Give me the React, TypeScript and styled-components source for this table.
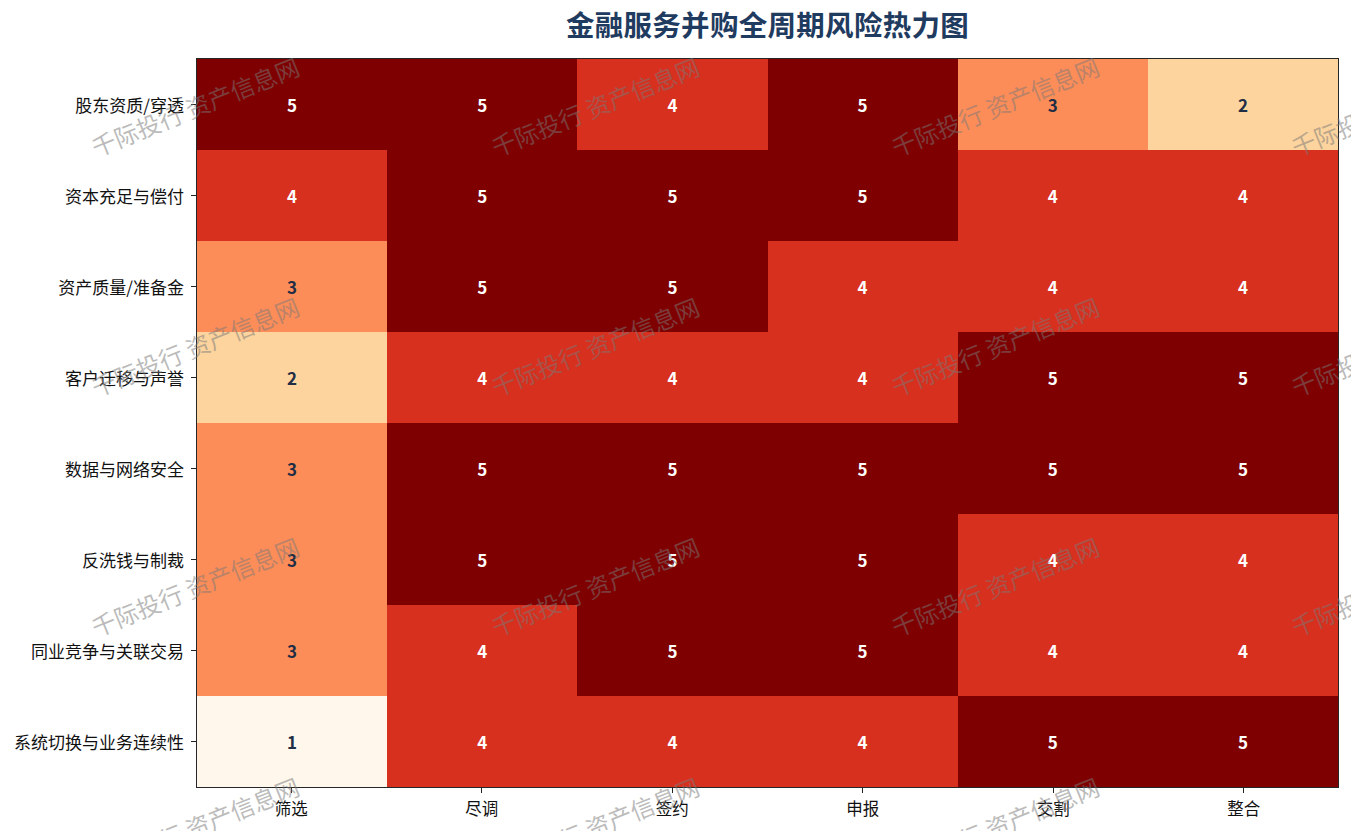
import React from "react";
import styled, { createGlobalStyle } from "styled-components";

const rows = [
    "股东资质/穿透",
    "资本充足与偿付",
    "资产质量/准备金",
    "客户迁移与声誉",
    "数据与网络安全",
    "反洗钱与制裁",
    "同业竞争与关联交易",
    "系统切换与业务连续性",
];

const stages = ["筛选", "尽调", "签约", "申报", "交割", "整合"];

const scores = [
    [5, 5, 4, 5, 3, 2],
    [4, 5, 5, 5, 4, 4],
    [3, 5, 5, 4, 4, 4],
    [2, 4, 4, 4, 5, 5],
    [3, 5, 5, 5, 5, 5],
    [3, 5, 5, 5, 4, 4],
    [3, 4, 5, 5, 4, 4],
    [1, 4, 4, 4, 5, 5],
];

// OrRd colormap, 1..5
const palette: Record<number, string> = {
    1: "#fff7ec",
    2: "#fdd49e",
    3: "#fc8d59",
    4: "#d7301f",
    5: "#7f0000",
};

const watermarks: { x: number; y: number }[] = [];
for (let j = 0; j < 4; j++) {
    for (let i = 0; i < 4; i++) {
        watermarks.push({ x: 195 + i * 400, y: 106 + j * 240 });
    }
}

const GlobalStyle = createGlobalStyle`
    html, body {
        margin: 0;
        padding: 0;
        background: #ffffff;
    }
    body {
        font-family: "Noto Sans CJK SC", "Noto Sans", sans-serif;
    }
`;

const Page = styled.div`
    position: relative;
    width: 1351px;
    height: 831px;
    overflow: hidden;
    background: #ffffff;
`;

const Title = styled.h1`
    margin: 0;
    height: 58px;
    padding-top: 4px;
    box-sizing: border-box;
    width: 1535px;
    text-align: center;
    font-size: 28.5px;
    line-height: 40px;
    font-weight: 700;
    color: #1f3b60;
    letter-spacing: 0.3px;
`;

const Chart = styled.div`
    display: grid;
    grid-template-columns: 196px 1143px;
    grid-template-rows: 730px auto;
`;

const YAxis = styled.div`
    display: flex;
    flex-direction: column;
    padding: 1px 0;
`;

const YRow = styled.div`
    flex: 1;
    display: flex;
    align-items: center;
    justify-content: flex-end;
    gap: 7px;
`;

const YLabel = styled.span`
    font-size: 17px;
    color: #111111;
    white-space: nowrap;
`;

const YTick = styled.span`
    width: 5px;
    height: 1px;
    background: #222222;
`;

const Axes = styled.div`
    box-sizing: border-box;
    border: 1px solid #262626;
    display: grid;
    grid-template-columns: repeat(6, 1fr);
    grid-template-rows: repeat(8, 1fr);
`;

const Cell = styled.div<{ $level: number }>`
    display: flex;
    align-items: center;
    justify-content: center;
    background: ${({ $level }) => palette[$level]};
    color: ${({ $level }) => ($level >= 4 ? "#ffffff" : "#1f2d45")};
    font-size: 17px;
    font-weight: 700;
`;

const Spacer = styled.div``;

const XAxis = styled.div`
    display: grid;
    grid-template-columns: repeat(6, 1fr);
`;

const XItem = styled.div`
    display: flex;
    flex-direction: column;
    align-items: center;
    gap: 4px;
`;

const XTick = styled.span`
    width: 1px;
    height: 5px;
    background: #222222;
`;

const XLabel = styled.span`
    font-size: 16.5px;
    line-height: 22px;
    color: #111111;
`;

const WatermarkLayer = styled.div`
    position: absolute;
    inset: 0;
    pointer-events: none;
`;

const Watermark = styled.span<{ $x: number; $y: number }>`
    position: absolute;
    left: ${({ $x }) => $x}px;
    top: ${({ $y }) => $y}px;
    transform: translate(-50%, -50%) rotate(-22deg);
    font-size: 24px;
    white-space: nowrap;
    color: rgba(120, 120, 120, 0.5);
`;

export default function App() {
    return (
        <Page>
            <GlobalStyle />
            <Title>金融服务并购全周期风险热力图</Title>
            <Chart>
                <YAxis>
                    {rows.map((r) => (
                        <YRow key={r}>
                            <YLabel>{r}</YLabel>
                            <YTick />
                        </YRow>
                    ))}
                </YAxis>
                <Axes>
                    {scores.map((row, ri) =>
                        row.map((v, ci) => (
                            <Cell key={`${ri}-${ci}`} $level={v}>
                                {v}
                            </Cell>
                        )),
                    )}
                </Axes>
                <Spacer />
                <XAxis>
                    {stages.map((s) => (
                        <XItem key={s}>
                            <XTick />
                            <XLabel>{s}</XLabel>
                        </XItem>
                    ))}
                </XAxis>
            </Chart>
            <WatermarkLayer>
                {watermarks.map((w, i) => (
                    <Watermark key={i} $x={w.x} $y={w.y}>
                        千际投行 资产信息网
                    </Watermark>
                ))}
            </WatermarkLayer>
        </Page>
    );
}
